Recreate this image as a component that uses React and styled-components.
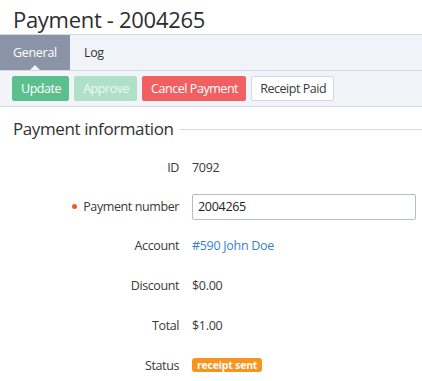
import React from "react";
import styled, { createGlobalStyle } from "styled-components";

const GlobalStyle = createGlobalStyle`
  body {
    margin: 0;
    background: #fff;
    font-family: "Open Sans", "Noto Sans", sans-serif;
    color: #333;
  }
`;

const Page = styled.div`
  width: 422px;
`;

const Title = styled.h1`
  margin: 0;
  padding: 5px 0 0 13px;
  height: 29px;
  font-size: 22px;
  font-weight: 400;
  line-height: 29px;
  color: #2e2e2e;
  letter-spacing: -0.3px;
`;

const Tabs = styled.div`
  display: flex;
  height: 35px;
  background: #f0f3f7;
  border-top: 1px solid #d5dae2;
`;

const Tab = styled.div`
  position: relative;
  display: flex;
  align-items: center;
  padding: 0 ${(p) => (p.$active ? "13px" : "14px")};
  font-size: 12.5px;
  letter-spacing: -0.3px;
  color: ${(p) => (p.$active ? "#fff" : "#333")};
  background: ${(p) => (p.$active ? "#8b94a6" : "transparent")};

  &::after {
    content: "";
    display: ${(p) => (p.$active ? "block" : "none")};
    position: absolute;
    left: 50%;
    bottom: 0;
    margin-left: -5px;
    border: 5px solid transparent;
    border-bottom-color: #f1f4f8;
    border-top: 0;
  }
`;

const Toolbar = styled.div`
  display: flex;
  gap: 5px;
  padding: 5px 12px;
  background: #f1f4f8;
  border-top: 1px solid #d5dae2;
  border-bottom: 1px solid #d5dae2;
`;

const variants = {
  green: { bg: "#5cc08e", color: "#fff", border: "#5cc08e" },
  pale: { bg: "#b1e0c8", color: "#eef8f3", border: "#b1e0c8" },
  red: { bg: "#f25f60", color: "#fff", border: "#f25f60" },
  white: { bg: "#fff", color: "#3a3a3a", border: "#d3d8df" },
};

const Button = styled.button`
  height: 25px;
  padding: 0 7px 0 8px;
  font-family: inherit;
  font-size: 12.5px;
  border-radius: 2px;
  border: 1px solid ${(p) => variants[p.$kind].border};
  background: ${(p) => variants[p.$kind].bg};
  color: ${(p) => variants[p.$kind].color};
  letter-spacing: -0.45px;
`;

const Section = styled.div`
  padding: 10px 0 0 13px;
`;

const SectionTitle = styled.div`
  display: flex;
  align-items: center;
  gap: 5px;
  font-size: 17px;
  color: #333;
  height: 22px;
  letter-spacing: -0.4px;

  &::after {
    content: "";
    flex: 1;
    height: 1px;
    background: #d9dde3;
    margin-top: 3px;
  }
`;

const Fields = styled.div`
  display: grid;
  grid-template-columns: 166px 1fr;
  column-gap: 13px;
  padding: 9px 6px 0 0;
`;

const Label = styled.div`
  display: flex;
  align-items: center;
  justify-content: flex-end;
  gap: 6px;
  height: ${(p) => p.$h}px;
  font-size: 12.5px;
  color: #3a3a3a;
  letter-spacing: -0.4px;
`;

const Required = styled.span`
  width: 5px;
  height: 5px;
  border-radius: 50%;
  background: #f05a28;
`;

const Value = styled.div`
  display: flex;
  align-items: center;
  height: ${(p) => p.$h}px;
  font-size: 12.5px;
  color: #3a3a3a;
  letter-spacing: -0.3px;
`;

const Link = styled.a`
  color: #3a7fcc;
  text-decoration: none;
`;

const Input = styled.input`
  width: 100%;
  box-sizing: border-box;
  height: 26px;
  padding: 0 5px;
  font-family: inherit;
  font-size: 12.5px;
  color: #222;
  border: 1px solid #b8bec8;
  border-radius: 2px;
  letter-spacing: -0.3px;
`;

const Badge = styled.span`
  display: inline-block;
  padding: 0 5px;
  height: 14px;
  line-height: 14px;
  font-size: 10.5px;
  font-weight: 700;
  color: #fff;
  background: #f7941e;
  border-radius: 3px;
  letter-spacing: -0.2px;
`;

const rows = [
  { label: "ID", value: "7092", h: 39 },
  { label: "Payment number", input: "2004265", required: true, h: 39 },
  { label: "Account", link: "#590 John Doe", h: 39 },
  { label: "Discount", value: "$0.00", h: 40 },
  { label: "Total", value: "$1.00", h: 40 },
  { label: "Status", badge: "receipt sent", h: 40 },
];

export default function App() {
  return (
    <Page>
      <GlobalStyle />
      <Title>Payment - 2004265</Title>
      <Tabs>
        <Tab $active>General</Tab>
        <Tab>Log</Tab>
      </Tabs>
      <Toolbar>
        <Button $kind="green">Update</Button>
        <Button $kind="pale">Approve</Button>
        <Button $kind="red">Cancel Payment</Button>
        <Button $kind="white">Receipt Paid</Button>
      </Toolbar>
      <Section>
        <SectionTitle>Payment information</SectionTitle>
        <Fields>
          {rows.map((r) => (
            <React.Fragment key={r.label}>
              <Label $h={r.h}>
                {r.required && <Required />}
                {r.label}
              </Label>
              <Value $h={r.h}>
                {r.input && <Input defaultValue={r.input} />}
                {r.link && <Link href="#">{r.link}</Link>}
                {r.badge && <Badge>{r.badge}</Badge>}
                {r.value}
              </Value>
            </React.Fragment>
          ))}
        </Fields>
      </Section>
    </Page>
  );
}
